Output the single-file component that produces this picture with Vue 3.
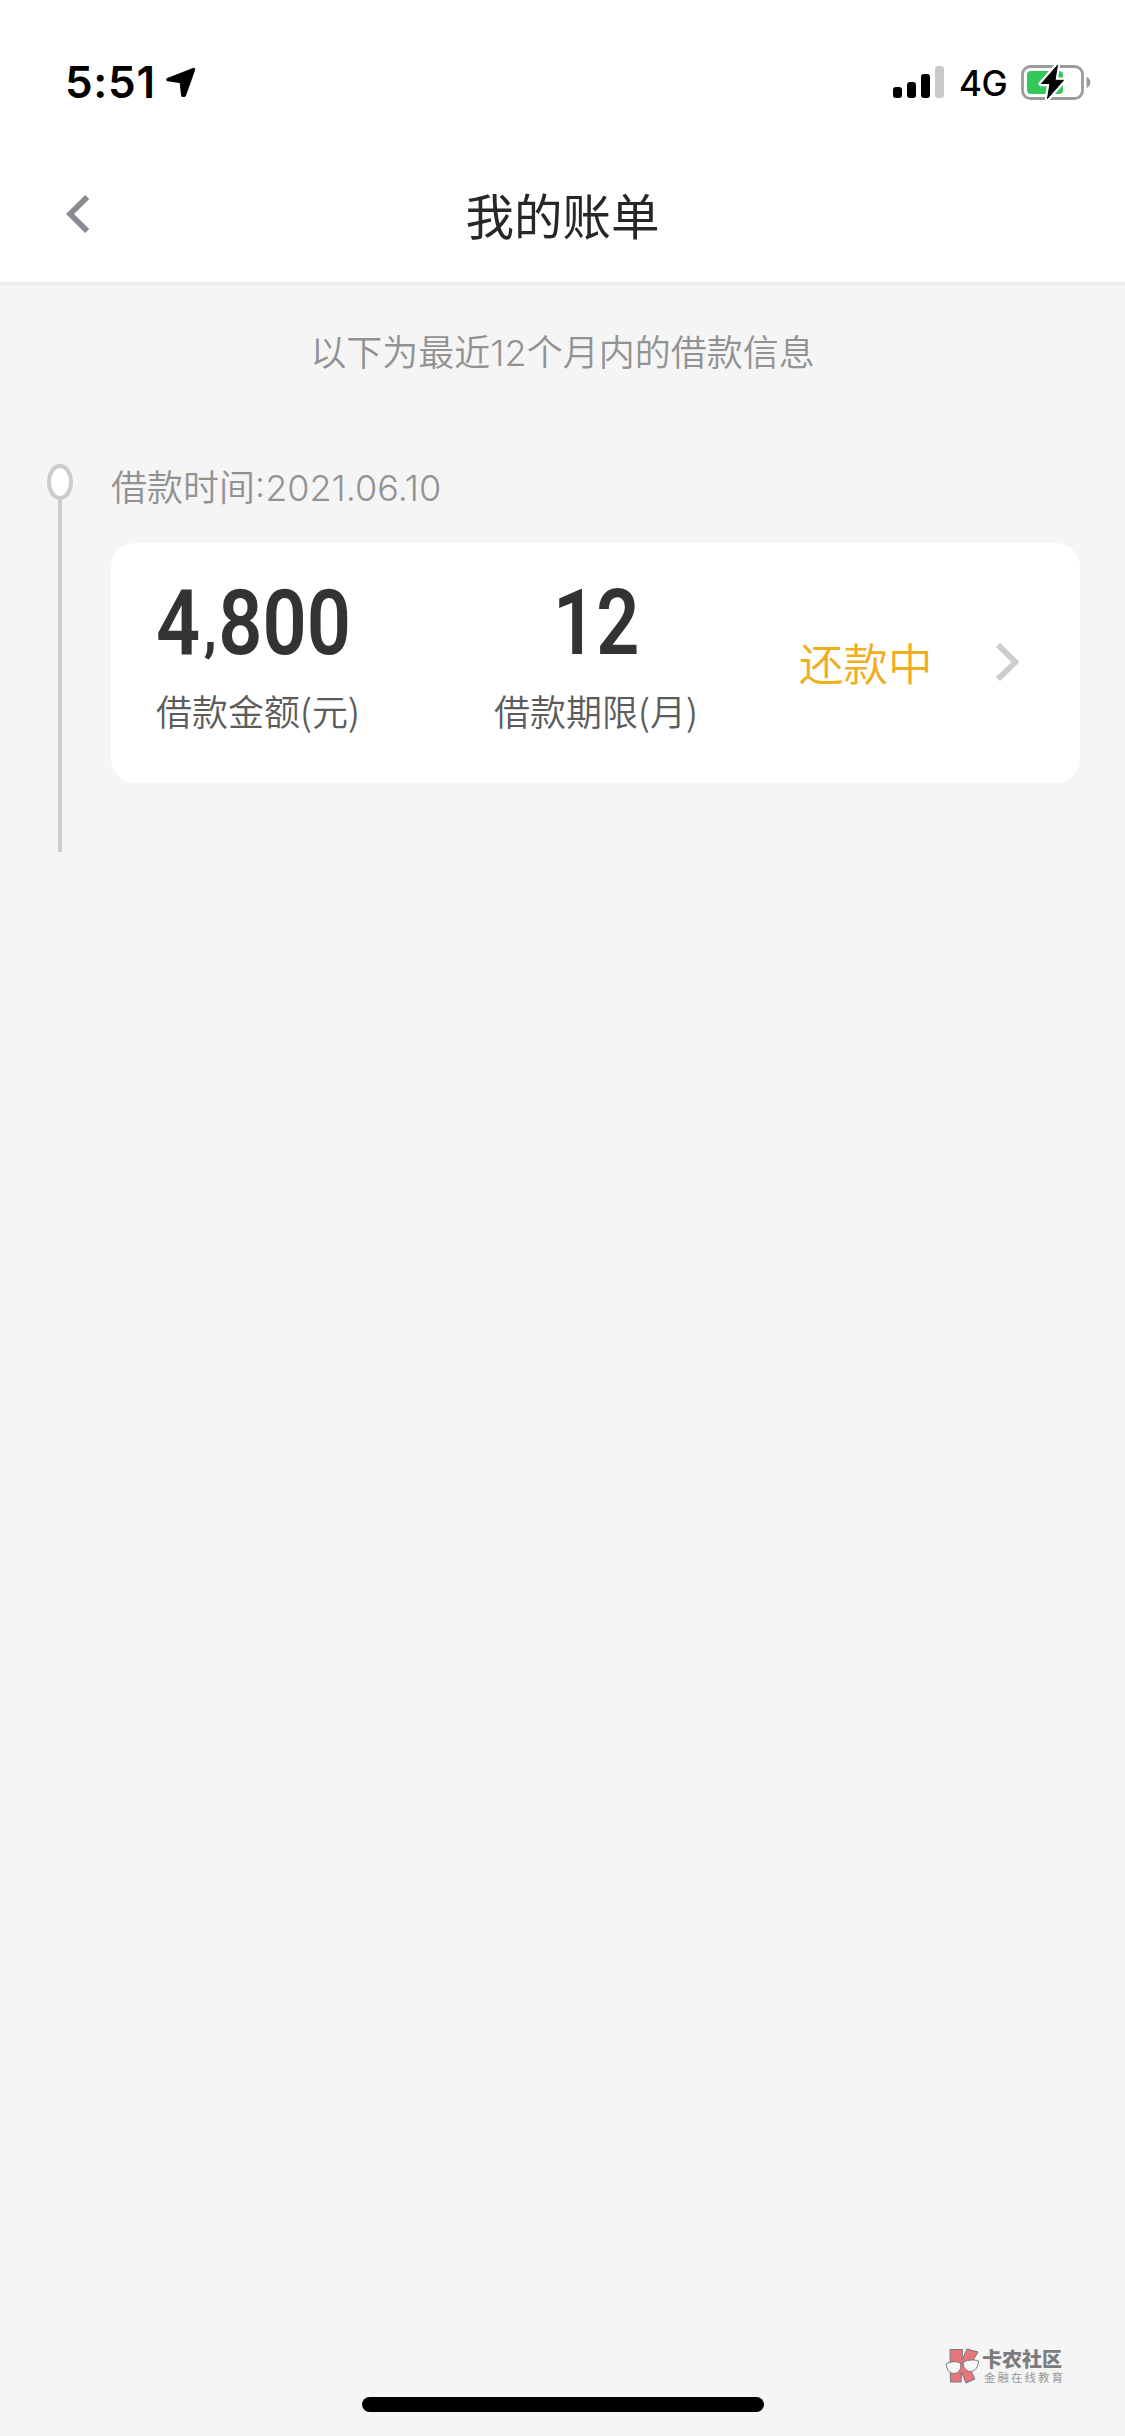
<script setup>
const signal = [11, 16, 24, 32]
const loans = [
  { date: '2021.06.10', amount: '4,800', term: '12', status: '还款中' }
]
</script>

<template>
  <div class="screen">
    <div class="status-bar">
      <div class="clock">
        <span class="time">5:51</span>
        <svg class="location" width="30" height="31" viewBox="0 0 30 31">
          <path d="M27.5 2.5 L2 12.6 L15.2 14.6 L16.8 28.3 L18.4 28.3 Z" fill="#000" stroke="#000" stroke-width="3.4" stroke-linejoin="round" />
        </svg>
      </div>
      <div class="indicators">
        <div class="signal">
          <i v-for="(h, i) in signal" :key="i" :class="{ off: i === 3 }" :style="{ height: h + 'px' }"></i>
        </div>
        <span class="network">4G</span>
        <svg class="battery" width="72" height="38" viewBox="0 0 72 38">
          <rect x="1.5" y="4.5" width="60" height="32" rx="8" fill="#fff" stroke="#9b9b9b" stroke-width="2.8" />
          <path d="M65.5 14.8 C70.6 17 70.6 24 65.5 26.2 Z" fill="#9b9b9b" />
          <rect x="6" y="9" width="36" height="23" rx="4" fill="#34c759" />
          <path d="M36.5 2.8 L20 21.8 H28.5 L26.3 37 L43 18 H34.3 Z" fill="#fff" stroke="#fff" stroke-width="5" stroke-linejoin="round" />
          <path d="M36.5 3.3 L20.5 21.5 H29 L26.5 36.5 L42.5 18.3 H34 Z" fill="#000" stroke="#000" stroke-width="1" stroke-linejoin="round" />
        </svg>
      </div>
    </div>

    <header class="nav">
      <svg class="back" width="24" height="38" viewBox="0 0 24 38">
        <path d="M21.2 2 L4 19 L21.2 36" fill="none" stroke="#8a8a92" stroke-width="5.8" />
      </svg>
      <h1>我的账单</h1>
    </header>

    <main>
      <p class="hint">以下为最近<span class="num">12</span>个月内的借款信息</p>

      <section v-for="loan in loans" :key="loan.date" class="entry">
        <div class="rail">
          <span class="dot"></span>
          <span class="line"></span>
        </div>
        <div class="body">
          <div class="date">借款时间<span class="num">:{{ loan.date }}</span></div>
          <div class="card">
            <div class="cell amount">
              <div class="figure">
                <b><span v-for="(c, i) in loan.amount" :key="i" :class="{ comma: c === ',' }">{{ c }}</span></b>
              </div>
              <div class="label">借款金额(元)</div>
            </div>
            <div class="cell term">
              <div class="figure"><b>{{ loan.term }}</b></div>
              <div class="label">借款期限(月)</div>
            </div>
            <div class="state">{{ loan.status }}</div>
            <svg class="more" width="24" height="38" viewBox="0 0 24 38">
              <path d="M2 2 L19.4 19 L2 36" fill="none" stroke="#ccc" stroke-width="5.8" />
            </svg>
          </div>
        </div>
      </section>
    </main>

    <footer>
      <div class="brand">
        <svg width="35" height="36" viewBox="0 0 35 36">
          <g fill="#e5767c" stroke="#77777a" stroke-width="1" stroke-linejoin="round">
            <path d="M5 1.5 H17.5 L17 12 L22 1 L33 4 L24 19 L30 31 L21 35 L16.5 24 L16 34 H5.5 Z" />
          </g>
          <g fill="#f7f7f7" stroke="#77777a" stroke-width="1">
            <path d="M1 16 C6 13 13 13 15.5 15.5 C17 21 13 26 8.5 25.5 C3.5 25 2 21 1 16 Z" />
            <path d="M18 15 C20 12 29 11 33.5 13 C33.5 19 30 23.5 25 23.5 C21 23 18.5 20 18 15 Z" />
            <path d="M15.5 16.5 Q17 14.5 18 15.5" fill="none" />
          </g>
        </svg>
        <div class="brand-text">
          <strong>卡农社区</strong>
          <small>金融在线教育</small>
        </div>
      </div>
      <div class="home"></div>
    </footer>
  </div>
</template>

<style>
body {
  background: #f5f5f5;
}
</style>

<style scoped>
.screen {
  box-sizing: border-box;
  width: 1125px;
  height: 2436px;
  display: flex;
  flex-direction: column;
  overflow: hidden;
  background: #f5f5f5;
  font-family: "Noto Sans CJK SC", sans-serif;
}
.status-bar {
  flex: none;
  height: 132px;
  display: flex;
  justify-content: space-between;
  align-items: flex-start;
  background: #fff;
}
.clock {
  display: flex;
  padding: 60px 0 0 65px;
}
.time {
  width: 101px;
  font: 600 44px/44px Inter, sans-serif;
  letter-spacing: 0.7px;
}
.location {
  margin-top: 7px;
}
.indicators {
  display: flex;
  align-items: flex-start;
  padding: 62px 32px 0 0;
}
.signal {
  display: flex;
  align-items: flex-end;
  gap: 5px;
  height: 36px;
}
.signal i {
  width: 9px;
  border-radius: 3px;
  background: #000;
}
.signal i.off {
  background: #c9c9c9;
}
.network {
  width: 62px;
  margin: 3px 0 0 15px;
  font: 500 35px/36px Inter, sans-serif;
  letter-spacing: -0.5px;
}
.nav {
  flex: none;
  box-sizing: border-box;
  height: 153px;
  display: grid;
  grid-template-columns: 66px 24px 1fr 90px;
  background: #fff;
  border-bottom: 3px solid #ebebeb;
}
.back {
  grid-column: 2;
  margin-top: 63px;
}
h1 {
  grid-column: 3;
  margin: 46px 0 0;
  text-align: center;
  font-size: 48.5px;
  line-height: 72px;
  font-weight: 400;
  color: #27272b;
}
main {
  flex: 1;
}
.hint {
  margin: 41px 0 0;
  height: 50px;
  line-height: 48px;
  text-align: center;
  font-size: 36px;
  font-weight: 350;
  color: #929292;
}
.num {
  font-family: Inter, sans-serif;
  font-weight: 350;
}
.entry {
  display: flex;
  margin-top: 88px;
  padding: 0 45px 0 47px;
}
.rail {
  width: 64px;
  display: flex;
  flex-direction: column;
}
.dot {
  box-sizing: border-box;
  width: 26px;
  height: 36px;
  border: 4px solid #ccc;
  border-radius: 50%;
  background: #fff;
}
.line {
  width: 4px;
  height: 352px;
  margin-left: 11px;
  background: #cfcfcf;
}
.body {
  flex: 1;
}
.date {
  height: 79px;
  line-height: 42px;
  font-size: 36px;
  font-weight: 350;
  color: #929292;
}
.card {
  box-sizing: border-box;
  height: 240px;
  display: flex;
  align-items: flex-start;
  padding-left: 45px;
  border-radius: 24px;
  background: #fff;
}
.cell {
  width: 338px;
}
.figure {
  box-sizing: border-box;
  height: 129px;
  padding-top: 41px;
  color: #333;
  line-height: 80px;
}
.figure b {
  display: inline-block;
  font: 600 90px/80px Roboto, sans-serif;
  transform: scaleX(0.86);
  transform-origin: 0 0;
}
.comma {
  display: inline-block;
  width: 21px;
  font-size: 56px;
  font-weight: 900;
  line-height: 40px;
  text-indent: 4px;
  transform: translateY(-5px);
}
.term {
  width: 306px;
}
.term .figure {
  padding-left: 59px;
}
.term b {
  transform: scaleX(0.84);
}
.label {
  line-height: 48px;
  margin-top: 14px;
  font-size: 36px;
  font-weight: 350;
  color: #5c5c5c;
}
.state {
  width: 197px;
  margin-top: 86px;
  margin-left: -1px;
  line-height: 66px;
  font-size: 44.5px;
  font-weight: 350;
  color: #f0ad1e;
}
.more {
  margin-top: 100px;
}
footer {
  flex: none;
  display: flex;
  flex-direction: column;
  align-items: center;
  height: 88px;
}
.brand {
  align-self: flex-end;
  display: flex;
  width: 180px;
  height: 49px;
}
.brand-text {
  display: flex;
  flex-direction: column;
  margin-left: 2px;
}
.brand strong {
  font-size: 20px;
  line-height: 22px;
  font-weight: 900;
  color: #7c7c7e;
}
.brand small {
  margin: 0 0 0 2px;
  font-size: 11.5px;
  line-height: 14px;
  letter-spacing: 2px;
  color: #969696;
}
.home {
  width: 402px;
  height: 15px;
  border-radius: 8px;
  background: #000;
}
</style>
